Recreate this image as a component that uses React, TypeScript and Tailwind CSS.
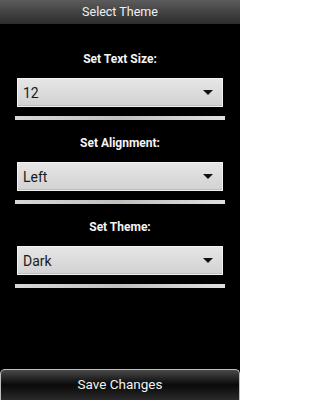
import React from "react";

function Spinner({ value }: { value: string }) {
  return (
    <div className="mx-[17px] h-[29px] flex items-center justify-between border border-[#f2f2f2] bg-gradient-to-b from-[#e6e6e6] to-[#d2d2d2] pl-[5px] pr-[9px] shadow-[inset_0_-1px_0_#bdbdbd]">
      <span className="text-[14px] text-[#1a1a1a] leading-none">{value}</span>
      <svg width="10" height="6" viewBox="0 0 10 6">
        <polygon points="0,0 10,0 5,5" fill="#111" />
      </svg>
    </div>
  );
}

function Section({ label, value, first }: { label: string; value: string; first?: boolean }) {
  return (
    <div className={first ? "mt-[28px]" : "mt-[16px]"}>
      <div className="h-[14px] text-center text-[12px] leading-[14px] font-bold text-[#f4f4f4]">{label}</div>
      <div className="mt-[12px]">
        <Spinner value={value} />
      </div>
      <div className="mt-[9px] mx-[15px] h-[4px] bg-gradient-to-r from-[#d8d8d8] via-[#bfbfbf] to-[#e0e0e0]" />
    </div>
  );
}

export default function App() {
  return (
    <div
      className="w-[240px] h-[400px] bg-black flex flex-col overflow-hidden"
      style={{ fontFamily: "Roboto, 'Noto Sans', sans-serif" }}
    >
      <div className="h-[24px] flex items-center justify-center bg-gradient-to-b from-[#5c5c5c] to-[#2c2c2c]">
        <span className="text-[12.5px] text-[#f0f0f0] leading-none">Select Theme</span>
      </div>
      <Section first label="Set Text Size:" value="12" />
      <Section label="Set Alignment:" value="Left" />
      <Section label="Set Theme:" value="Dark" />
      <div className="mt-auto h-[31px] rounded-t-[5px] border border-b-0 border-[#bdbdbd] bg-gradient-to-b from-[#4a4a4a] via-[#0a0a0a] to-[#2a2a2a] flex items-center justify-center">
        <span className="text-[13.5px] text-[#f2f2f2] leading-none">Save Changes</span>
      </div>
    </div>
  );
}
